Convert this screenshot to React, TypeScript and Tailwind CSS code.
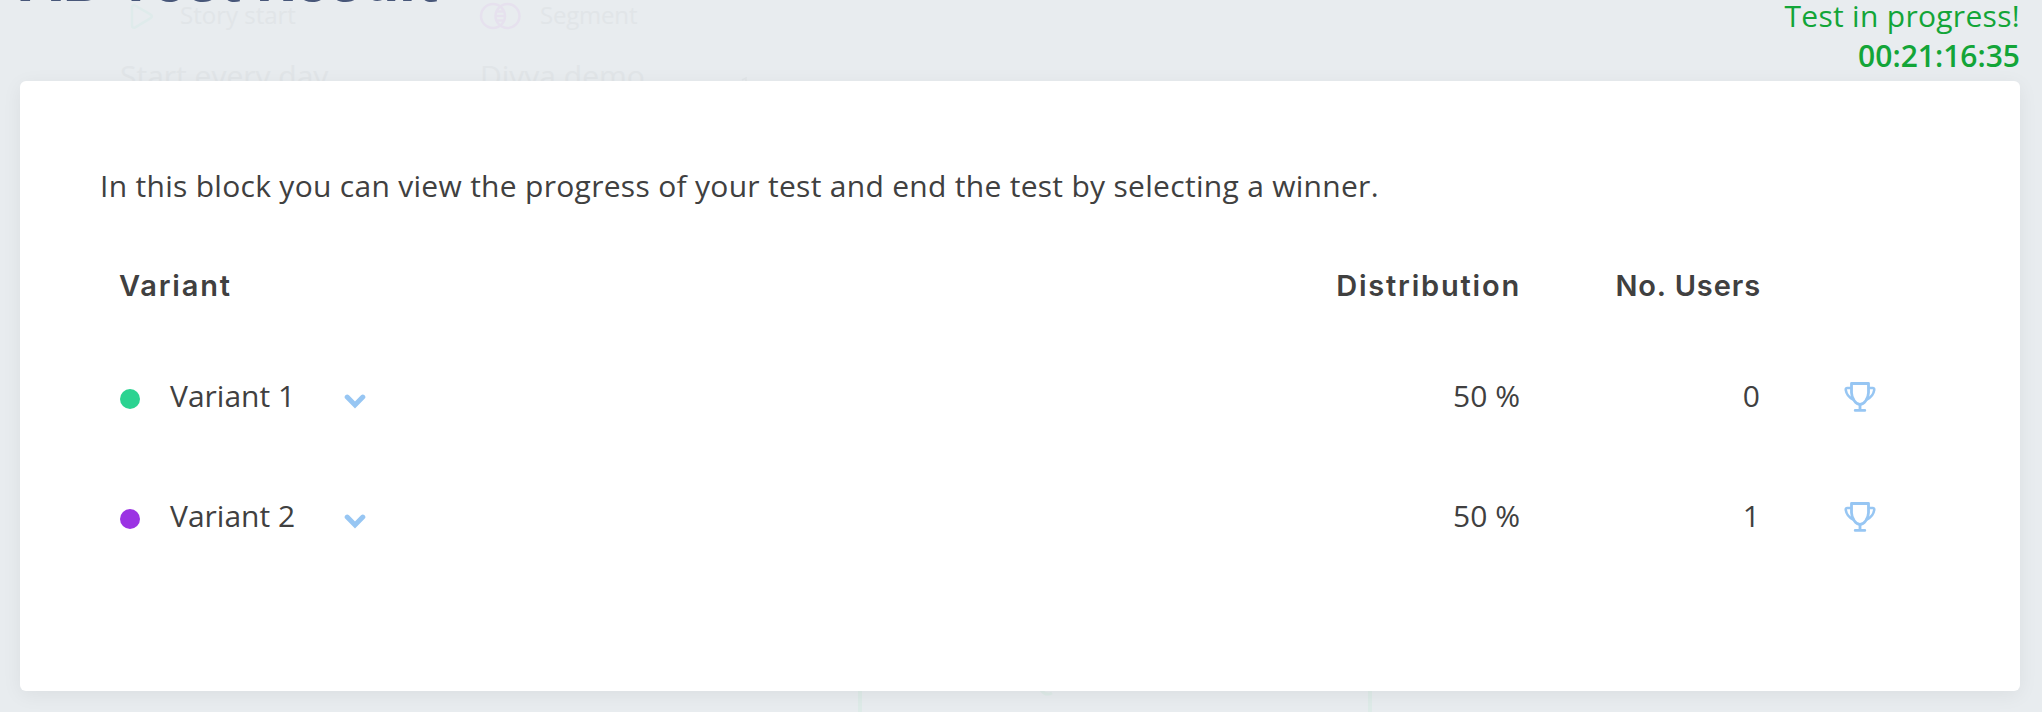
import React from 'react';

interface Variant {
  name: string;
  dot: string;
  distribution: number;
  users: number;
}

const variants: Variant[] = [
  { name: 'Variant 1', dot: 'bg-[#2bd391]', distribution: 50, users: 0 },
  { name: 'Variant 2', dot: 'bg-[#9b33e3]', distribution: 50, users: 1 },
];

const ChevronIcon = () => (
  <svg width="22" height="16" viewBox="0 0 22 16" fill="none" stroke="#97c6f3" strokeWidth="5" strokeLinecap="round">
    <path d="M3.2 4.1 11 11.9l7.8-7.8" />
  </svg>
);

const TrophyIcon = () => (
  <svg width="32" height="30" viewBox="0 0 32 30" fill="none" stroke="#97c6f3" strokeWidth="2.8" strokeLinecap="round" strokeLinejoin="round">
    <path d="M7.500 1.500h17v9c0 6-4.500 12-8.500 12s-8.500-6-8.500-12z" />
    <path d="M7 6H3.400c-1.300 0-1.800.8-1.600 2.100.6 4 3.100 7.300 7.400 9.400" strokeWidth="2.600" />
    <path d="M25 6h3.600c1.300 0 1.800.8 1.600 2.100-.6 4-3.100 7.300-7.400 9.400" strokeWidth="2.600" />
    <path d="M16 23v5M11.200 28.400h9.600" />
  </svg>
);

// Faded flow editor that shows through behind the dialog
const CanvasBackdrop = () => (
  <div className="absolute inset-0 overflow-hidden text-[#e1e5e8]" aria-hidden="true">
    <div className="absolute left-[180px] top-[-5px] text-[24px] leading-[40px] whitespace-nowrap">Story start</div>
    <div className="absolute left-[540px] top-[-5px] text-[24px] leading-[40px] tracking-[-0.2px] whitespace-nowrap">Segment</div>
    <div className="absolute left-[120px] top-[56px] text-[30px] leading-[40px] whitespace-nowrap">Start every day</div>
    <div className="absolute left-[480px] top-[56px] text-[30px] leading-[40px] whitespace-nowrap">Divya demo</div>
    <svg className="absolute left-0 top-0" width="2042" height="712" fill="none" strokeWidth="2.5">
      <path d="M132 7.500v18c0 2 1.500 2.800 3.200 1.900l15.500-9.300c1.600-1 1.600-2.600 0-3.500L135.200 5.500c-1.700-1-3.200 0-3.200 2z" stroke="#dfebeb" />
      <g stroke="#e6e1ee">
        <circle cx="493" cy="16" r="12" />
        <circle cx="507.500" cy="16" r="12" />
        <path d="M497 11.500h6.500M496 16h8.500M497 20.500h6.500" />
      </g>
      <path d="M742 80l4-2v3" stroke="#e1e5e8" strokeWidth="1.500" />
      <g stroke="#deebe8" strokeWidth="4">
        <path d="M860 690v22M1370 690v22" />
        <path d="M1041 690c3 4 7 5 11 3" strokeWidth="3" />
      </g>
    </svg>
  </div>
);

const App: React.FC = () => {
  return (
    <div className="relative h-[712px] w-full overflow-hidden bg-[#e8ecef] font-['Open_Sans','Noto_Sans',sans-serif] text-[30px] leading-[40px] text-[#404040]">
      <CanvasBackdrop />

      <div className="relative flex h-full flex-col pr-[22px] pb-[21px] pl-5">
        {/* Header */}
        <div className="flex h-[81px] shrink-0 items-end justify-between">
          <h1 className="mb-[66px] -ml-px font-['Inter',sans-serif] text-[58px] leading-[70px] font-bold tracking-[0.7px] text-[#485779]">AB Test Result</h1>
          <div className="mb-[5px] text-right text-[#13a538]">
            <div className="tracking-[0.3px]">Test in progress!</div>
            <div className="font-semibold">00:21:16:35</div>
          </div>
        </div>

        {/* Card */}
        <div className="flex-1 rounded-[6px] bg-white px-20 pt-[85px] shadow-[0_4px_20px_rgba(0,0,0,0.06)]">
          <p className="tracking-[0.295px]">In this block you can view the progress of your test and end the test by selecting a winner.</p>

          <div className="mt-[31px] px-5">
            <div className="grid h-[98px] grid-cols-[1fr_240px_240px_160px] items-center font-['Inter',sans-serif] text-[29px] font-semibold">
              <div className="-ml-px tracking-[1.8px]">Variant</div>
              <div className="-mr-px text-right tracking-[1.8px]">Distribution</div>
              <div className="-mr-px text-right tracking-[0.9px]">No. Users</div>
            </div>

            {variants.map((variant) => (
              <div key={variant.name} className="grid h-[120px] grid-cols-[1fr_240px_240px_160px] items-center">
                <div className="mt-0.5 flex items-center">
                  <span className={`mt-[6px] h-5 w-5 rounded-full ${variant.dot}`} />
                  <span className="ml-[30px] w-[174px]">{variant.name}</span>
                  <button className="mt-[10px]" aria-label="Show details">
                    <ChevronIcon />
                  </button>
                </div>
                <div className="mt-0.5 text-right">{variant.distribution} %</div>
                <div className="mt-0.5 text-right">{variant.users}</div>
                <button className="mt-[3px] ml-[84px]" aria-label="Select as winner">
                  <TrophyIcon />
                </button>
              </div>
            ))}
          </div>
        </div>
      </div>
    </div>
  );
};

export default App;
